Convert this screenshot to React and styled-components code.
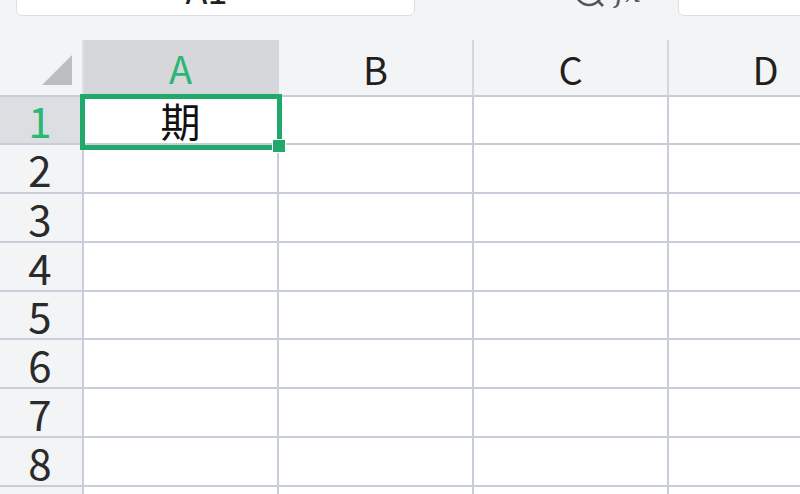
import React from "react";
import styled, { createGlobalStyle } from "styled-components";

const Global = createGlobalStyle`
  html, body { margin: 0; padding: 0; }
  body {
    width: 800px;
    height: 494px;
    overflow: hidden;
    background: #f3f4f6;
    font-family: "Noto Sans CJK SC", "Noto Sans", sans-serif;
  }
`;

const Page = styled.div`
  width: 800px;
  height: 494px;
  overflow: hidden;
  display: flex;
  flex-direction: column;
  background: #f3f4f6;
`;

const TopBar = styled.div`
  height: 40px;
  flex: none;
  display: flex;
  align-items: flex-start;
  overflow: hidden;
`;

const InputBox = styled.div`
  height: 40px;
  margin-top: -24px;
  box-sizing: border-box;
  background: #ffffff;
  border: 1px solid #dcdee3;
  border-radius: 6px;
  flex: none;
`;

const NameBox = styled(InputBox)`
  margin-left: 16px;
  width: 399px;
  display: flex;
  justify-content: center;
  padding-right: 18px;
  font-size: 36px;
  line-height: 36px;
  color: #222;
`;

const NameText = styled.span`
  margin-top: -7px;
`;

const Tools = styled.div`
  flex: 1;
  display: flex;
  align-items: flex-start;
  gap: 8px;
  padding-left: 158px;
`;

const Fx = styled.span`
  font-family: "DejaVu Serif", serif;
  font-style: italic;
  font-size: 28px;
  line-height: 30px;
  margin-top: -22px;
  color: #555;
`;

const FormulaBox = styled(InputBox)`
  width: 160px;
  margin-right: -38px;
`;

const Sheet = styled.div`
  flex: 1;
  display: grid;
  grid-template-columns: 84px repeat(4, 195px);
  grid-template-rows: 57px 48px 49px 49px 49px 48px 49px 49px 49px 49px;
  overflow: hidden;
`;

const Corner = styled.div`
  box-sizing: border-box;
  border-bottom: 2px solid #c8cdda;
  border-right: 2px solid #dde0e6;
  display: flex;
  align-items: flex-end;
  justify-content: flex-end;
  padding: 0 10px 10px 0;
`;

const ColHeader = styled.div`
  box-sizing: border-box;
  display: flex;
  align-items: center;
  justify-content: center;
  font-size: 38px;
  line-height: 1;
  padding-top: 2px;
  color: ${(p) => (p.$active ? "#2bb673" : "#1f1f1f")};
  background: ${(p) => (p.$active ? "#d5d7db" : "#f3f4f6")};
  border-bottom: ${(p) => (p.$active ? "3px solid #21a86b" : "2px solid #c8cdda")};
  border-right: 2px solid ${(p) => (p.$active ? "#d5d7db" : "#d4d7df")};
`;

const RowHeader = styled.div`
  box-sizing: border-box;
  display: flex;
  align-items: center;
  justify-content: center;
  padding-right: 2px;
  font-size: 42px;
  line-height: 40px;
  color: ${(p) => (p.$active ? "#2bb673" : "#2a2a2a")};
  background: ${(p) => (p.$active ? "#dcdee2" : "#f3f4f6")};
  border-right: 2px solid #c8cdda;
  border-bottom: 2px solid #c8cdda;
`;

const Cell = styled.div`
  position: relative;
  z-index: ${(p) => (p.$selected ? 2 : 0)};
  box-sizing: border-box;
  background: #ffffff;
  border-right: 2px solid #c8cdda;
  border-bottom: 2px solid #c8cdda;
  display: flex;
  align-items: center;
  justify-content: center;
  font-size: 40px;
  line-height: 1;
  color: #111;
`;

const Selection = styled.div`
  position: absolute;
  z-index: 3;
  left: -4px;
  top: -3px;
  width: 202px;
  height: 56px;
  box-sizing: border-box;
  border: 5px solid #21a86b;
  pointer-events: none;
`;

const Handle = styled.div`
  position: absolute;
  left: 188px;
  top: 41px;
  width: 12px;
  height: 12px;
  background: #21a86b;
  box-shadow: 0 0 0 1px #ffffff;
`;

const columns = ["A", "B", "C", "D"];
const rows = [1, 2, 3, 4, 5, 6, 7, 8, 9];

export default function App() {
  return (
    <Page>
      <Global />
      <TopBar>
        <NameBox>
          <NameText>A1</NameText>
        </NameBox>
        <Tools>
          <svg width="34" height="10" viewBox="0 0 34 10" style={{ flex: "none" }}>
            <circle cx="16" cy="-8" r="13" fill="none" stroke="#555" strokeWidth="2.6" />
            <line x1="25" y1="1" x2="30" y2="6" stroke="#555" strokeWidth="2.6" />
          </svg>
          <Fx>fx</Fx>
        </Tools>
        <FormulaBox />
      </TopBar>
      <Sheet>
        <Corner>
          <svg width="30" height="30" viewBox="0 0 30 30">
            <polygon points="30,0 30,30 0,30" fill="#bcbdc1" />
          </svg>
        </Corner>
        {columns.map((c, i) => (
          <ColHeader key={c} $active={i === 0}>
            {c}
          </ColHeader>
        ))}
        {rows.map((r) => (
          <React.Fragment key={r}>
            <RowHeader $active={r === 1}>{r}</RowHeader>
            {columns.map((c, i) => {
              const selected = r === 1 && i === 0;
              return (
                <Cell key={c} $selected={selected}>
                  {selected && (
                    <>
                      期
                      <Selection>
                        <Handle />
                      </Selection>
                    </>
                  )}
                </Cell>
              );
            })}
          </React.Fragment>
        ))}
      </Sheet>
    </Page>
  );
}
